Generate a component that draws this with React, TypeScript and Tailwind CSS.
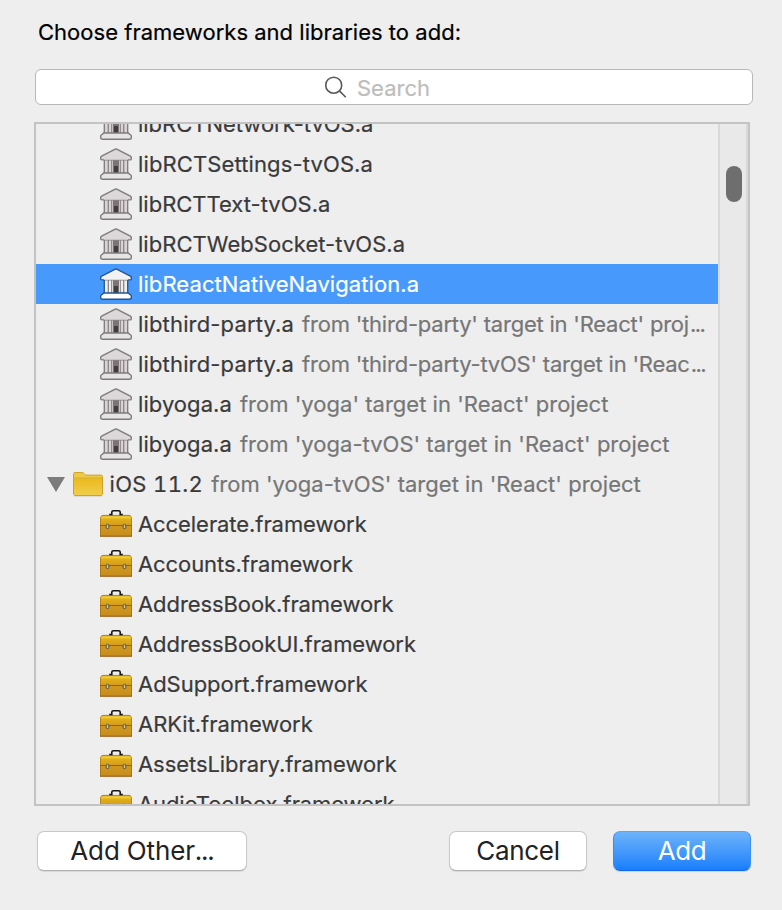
type Row = {
  name: string;
  tracking: string;
  kind: "library" | "framework" | "folder";
  detail?: string;
  detailTracking?: string;
  truncated?: boolean;
  selected?: boolean;
};

const rows: Row[] = [
  { name: "libRCTNetwork-tvOS.a", tracking: "tracking-[-0.02px]", kind: "library" },
  { name: "libRCTSettings-tvOS.a", tracking: "tracking-[0.12px]", kind: "library" },
  { name: "libRCTText-tvOS.a", tracking: "tracking-[0px]", kind: "library" },
  { name: "libRCTWebSocket-tvOS.a", tracking: "tracking-[0.04px]", kind: "library" },
  { name: "libReactNativeNavigation.a", tracking: "tracking-[0.09px]", kind: "library", selected: true },
  { name: "libthird-party.a", tracking: "tracking-[0.16px]", kind: "library", detail: "from 'third-party' target in 'React' proj", detailTracking: "tracking-[-0.22px]", truncated: true },
  { name: "libthird-party.a", tracking: "tracking-[0.16px]", kind: "library", detail: "from 'third-party-tvOS' target in 'Reac", detailTracking: "tracking-[-0.22px]", truncated: true },
  { name: "libyoga.a", tracking: "tracking-[0.06px]", kind: "library", detail: "from 'yoga' target in 'React' project", detailTracking: "tracking-[0.02px]" },
  { name: "libyoga.a", tracking: "tracking-[0.06px]", kind: "library", detail: "from 'yoga-tvOS' target in 'React' project", detailTracking: "tracking-[0.02px]" },
  { name: "iOS 11.2", tracking: "tracking-[0.35px]", kind: "folder", detail: "from 'yoga-tvOS' target in 'React' project", detailTracking: "tracking-[0.02px]" },
  { name: "Accelerate.framework", tracking: "tracking-[-0.07px]", kind: "framework" },
  { name: "Accounts.framework", tracking: "tracking-[-0.08px]", kind: "framework" },
  { name: "AddressBook.framework", tracking: "tracking-[-0.08px]", kind: "framework" },
  { name: "AddressBookUI.framework", tracking: "tracking-[-0.07px]", kind: "framework" },
  { name: "AdSupport.framework", tracking: "tracking-[-0.03px]", kind: "framework" },
  { name: "ARKit.framework", tracking: "tracking-[-0.04px]", kind: "framework" },
  { name: "AssetsLibrary.framework", tracking: "tracking-[-0.06px]", kind: "framework" },
  { name: "AudioToolbox.framework", tracking: "tracking-[-0.12px]", kind: "framework" },
];

function LibraryIcon({ selected }: { selected?: boolean }) {
  const edge = selected ? "#24548f" : "#7d7b7c";
  const face = selected ? "#f3f2f3" : "#dcd8da";
  const column = selected ? "#f0eff0" : "#d8d3d4";
  return (
    <svg width="32" height="32" viewBox="0 0 32 32" className="shrink-0">
      <path d="M4 12h24v13H4z" fill={column} />
      <path d="M4.3 12v13M27.700 12v13" stroke={edge} strokeWidth="1.300" />
      <path d="M8.300 12v13M23.700 12v13" stroke="#857d80" strokeWidth="1.200" />
      <path d="M11.700 12v13M20.300 12v13" stroke="#857d80" strokeWidth="1" />
      <path d="M13 12h6v13h-6z" fill="#7c7376" />
      <path d="M14 18h4v7h-4z" fill="#413c3e" />
      <path d="M15.300 1.100a1.800 1.800 0 0 1 1.400 0l13.700 7c.7.4.9.9.9 1.600v1c0 .8-.5 1.200-1.300 1.200H2c-.8 0-1.300-.4-1.300-1.200v-1c0-.7.2-1.200.9-1.600z" fill={face} />
      <path d="M4.300 11.900H2c-.8 0-1.300-.4-1.300-1.200v-1c0-.7.2-1.200.9-1.600l13.700-7a1.800 1.800 0 0 1 1.400 0l13.700 7c.7.4.9.9.9 1.600v1c0 .8-.5 1.200-1.300 1.200h-2.300" fill="none" stroke={edge} strokeWidth="1.400" />
      <path d="M5 12.200h22" stroke="#8f888b" strokeWidth=".8" />
      <path d="M3.500 25h25c.5 0 .6 1 1.300 1.400 1 .5 1.500.9 1.500 1.700v1.400c0 1.200-.7 1.800-1.800 1.800h-27c-1.100 0-1.800-.6-1.800-1.800v-1.400c0-.8.5-1.200 1.500-1.700.7-.4.8-1.400 1.300-1.400z" fill={selected ? "#fff" : "#e7e4e5"} stroke={edge} strokeWidth="1.400" />
    </svg>
  );
}

function ToolboxIcon() {
  return (
    <svg width="32" height="32" viewBox="0 0 32 32" className="shrink-0">
      <defs>
        <linearGradient id="toolbox-lid" x1="0" y1="0" x2="0" y2="1">
          <stop offset="0" stopColor="#d9a61c" />
          <stop offset=".2" stopColor="#efd03a" />
          <stop offset=".4" stopColor="#e0ad18" />
          <stop offset="1" stopColor="#d29a1e" />
        </linearGradient>
        <linearGradient id="toolbox-base" x1="0" y1="0" x2="0" y2="1">
          <stop offset="0" stopColor="#cf981f" />
          <stop offset="1" stopColor="#c68c1c" />
        </linearGradient>
      </defs>
      <path d="M3 7h26c1.700 0 3 2 3 4v7H0v-7c0-2 1.300-4 3-4z" fill="url(#toolbox-lid)" />
      <path d="M.4 18v-7c0-2 1.200-3.600 2.600-3.600h26c1.400 0 2.600 1.600 2.600 3.600v7" fill="none" stroke="#a9761a" strokeWidth=".8" />
      <path d="M0 18h32v10.500H0z" fill="url(#toolbox-base)" />
      <path d="M0 17.500h32" stroke="#9b5b0c" strokeWidth="1" />
      <path d="M.4 18v10M31.600 18v10" stroke="#a06a13" strokeWidth=".8" />
      <path d="M0 28.200h32" stroke="#8f5a16" strokeWidth="1" />
      <path d="M9.200 6.500h2.600V4.300c0-1 .5-1.500 1.500-1.500h5.400c1 0 1.500.5 1.500 1.500v2.200h2.600" fill="none" stroke="#171613" strokeWidth="1.600" />
      <rect x="6.200" y="16.300" width="2.600" height="4.400" rx="1.200" fill="#c8c6ba" stroke="#4f4325" strokeWidth=".9" />
      <rect x="23.200" y="16.300" width="2.600" height="4.400" rx="1.200" fill="#c8c6ba" stroke="#4f4325" strokeWidth=".9" />
    </svg>
  );
}

function FolderIcon() {
  return (
    <svg width="30" height="26" viewBox="0 0 30 26" className="shrink-0">
      <defs>
        <linearGradient id="folder-front" x1="0" y1="0" x2="0" y2="1">
          <stop offset="0" stopColor="#ecb91c" />
          <stop offset="1" stopColor="#efce4c" />
        </linearGradient>
      </defs>
      <path d="M1 25.200h28" stroke="#d6d2c6" strokeWidth="1" />
      <path d="M.5 23V2.700c0-.8.6-1.200 1.500-1.200h7.300c.8 0 1.200.3 1.700.9l1 1.100c.4.500.8.600 1.500.6H28c.9 0 1.500.6 1.500 1.500V23c0 .9-.6 1.500-1.500 1.500H2c-.9 0-1.500-.6-1.500-1.500z" fill="#ecca48" stroke="#d2a02b" />
      <path d="M1 7.500h28V23c0 .8-.4 1-1 1H2c-.6 0-1-.2-1-1z" fill="url(#folder-front)" />
      <path d="M1 7h28" stroke="#d6a521" strokeWidth=".8" />
    </svg>
  );
}

function ListRow({ row }: { row: Row }) {
  const folder = row.kind === "folder";
  return (
    <li
      className={
        "flex h-10 shrink-0 items-center whitespace-nowrap text-[22px] leading-10 [-webkit-text-stroke:0.200px] " +
        (row.selected ? "bg-[#4899fc] text-white " : "text-[#3a3a3a] ") +
        (folder ? "pl-[11px]" : "pl-16")
      }
    >
      {folder && (
        <svg width="18" height="15" viewBox="0 0 18 15" className="mr-2 shrink-0">
          <path d="M0 0h18L9 15z" fill="#7c7c7c" />
        </svg>
      )}
      {row.kind === "library" && <LibraryIcon selected={row.selected} />}
      {row.kind === "framework" && <ToolboxIcon />}
      {folder && <FolderIcon />}
      <span className={(folder ? "ml-[6.500px] tabular-nums " : "ml-[6px] ") + row.tracking}>{row.name}</span>
      {row.detail && (
        <span className={"ml-2 text-[#767676] " + row.detailTracking}>
          {row.detail}
          {row.truncated && <span className="ml-px tracking-[-1.600px]">...</span>}
        </span>
      )}
    </li>
  );
}

export default function App() {
  return (
    <main className="flex h-[910px] w-[782px] flex-col overflow-hidden bg-[#eeeeee] font-['Inter',sans-serif]">
      <h1 className="ml-[38px] mt-4 h-8 whitespace-nowrap text-[22px] leading-8 tracking-[0.020px] text-black [-webkit-text-stroke:0.200px]">
        Choose frameworks and libraries to add:
      </h1>

      <div className="ml-[35px] mt-[21px] flex h-9 w-[718px] shrink-0 items-center rounded-[6px] border border-[#b8b8b8] bg-white pl-[288px]">
        <svg width="23" height="22" viewBox="0 0 23 22" fill="none" stroke="#595959" strokeWidth="1.600">
          <circle cx="9.700" cy="9.200" r="8" />
          <path d="M15.400 14.900l6.400 6.400" />
        </svg>
        <span className="ml-[10px] pt-0.5 text-[22px] leading-8 text-[#bdbdbd] [-webkit-text-stroke:0.200px]">Search</span>
      </div>

      <section className="ml-[34px] mt-[17px] flex h-[684px] w-[716px] shrink-0 overflow-hidden border-2 border-[#c3c3c3]">
        <ul className="-mt-5 flex w-[682px] shrink-0 flex-col">
          {rows.map((row, i) => (
            <ListRow key={i} row={row} />
          ))}
        </ul>
        <div className="flex w-[30px] shrink-0 border-x-2 border-[#d9d9d9] bg-[#e9e9e9] pl-1.5">
          <div className="mt-[42px] h-9 w-4 rounded-full bg-[#6e6e6e]" />
        </div>
      </section>

      <div className="ml-[37px] mt-[25px] flex h-10 w-[714px] shrink-0 text-[26px] leading-none">
        <button className="flex h-10 w-[210px] items-center justify-center rounded-[7px] border border-[#c8c8c8] border-b-[#b2b2b2] bg-white text-[#222222] shadow-[0_1px_1px_rgba(0,0,0,0.1)]">
          <span className="tracking-[-0.150px]">
            Add Other<span className="tracking-[-1.200px]">...</span>
          </span>
        </button>
        <button className="ml-auto flex h-10 w-[138px] items-center justify-center rounded-[7px] border border-[#c8c8c8] border-b-[#b2b2b2] bg-white tracking-[-0.300px] text-[#222222] shadow-[0_1px_1px_rgba(0,0,0,0.1)]">
          Cancel
        </button>
        <button className="ml-[26px] flex h-10 w-[138px] items-center justify-center rounded-[7px] border border-t-[#5fa6ef] border-x-[#3d8df0] border-b-[#1068ea] bg-linear-to-b from-[#6cb3fa] to-[#157efb] tracking-[-0.400px] text-white shadow-[0_1px_1px_rgba(0,0,0,0.12)]">
          Add
        </button>
      </div>
    </main>
  );
}
